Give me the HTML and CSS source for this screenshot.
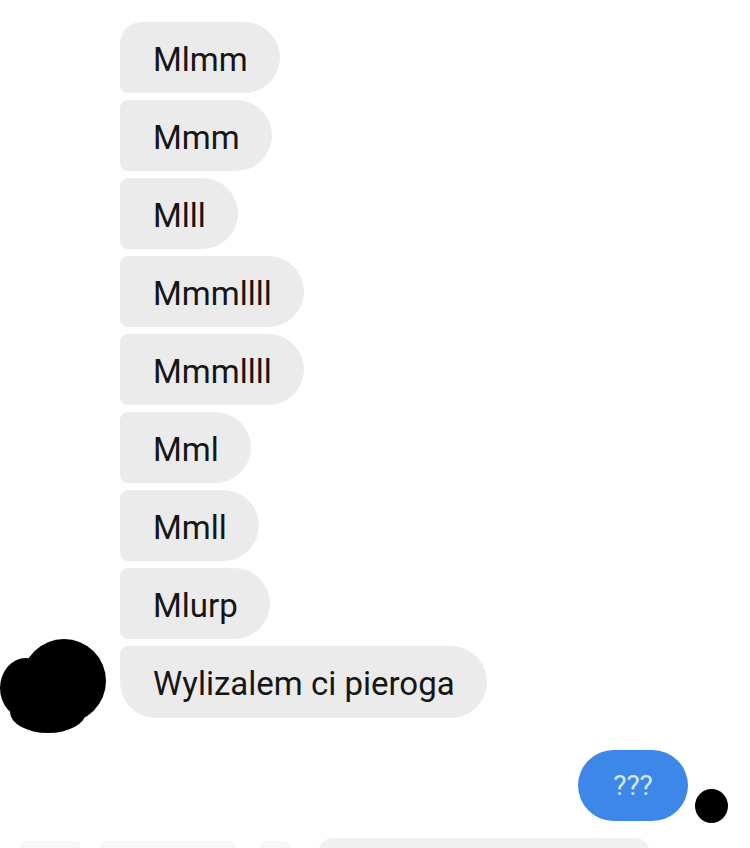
FILE: index.html
```html
<!DOCTYPE html>
<html>
<head>
<meta charset="utf-8">
<link rel="stylesheet" href="styles.css">
</head>
<body>
<div class="chat">
  <div class="group">
    <div class="slot"></div>
    <div class="bubbles">
      <div class="bubble first">Mlmm</div>
      <div class="bubble">Mmm</div>
      <div class="bubble">Mlll</div>
      <div class="bubble">Mmmllll</div>
      <div class="bubble">Mmmllll</div>
      <div class="bubble">Mml</div>
      <div class="bubble">Mmll</div>
      <div class="bubble">Mlurp</div>
      <div class="bubble last">Wylizalem ci pieroga</div>
    </div>
    <svg class="avatar" width="110" height="100" viewBox="0 0 110 100">
      <ellipse cx="64" cy="47" rx="42" ry="42" fill="#000"/>
      <ellipse cx="48" cy="78" rx="38" ry="21" fill="#000"/>
      <ellipse cx="26" cy="54" rx="26" ry="30" fill="#000"/>
    </svg>
  </div>
  <div class="mine">
    <div class="bubble blue">???</div>
    <div class="seen"></div>
  </div>
  <div class="composer">
    <div class="faint short"></div>
    <div class="faint mid"></div>
    <div class="faint tiny"></div>
    <div class="inputbox"></div>
  </div>
</div>
</body>
</html>
```
FILE: styles.css
```css
html, body {
  margin: 0;
  padding: 0;
  background: #ffffff;
}
body {
  width: 750px;
  height: 848px;
  overflow: hidden;
  font-family: Roboto, "Liberation Sans", sans-serif;
}
.chat {
  padding-top: 22px;
}
.group {
  position: relative;
  display: flex;
}
.slot {
  width: 120px;
  flex: none;
}
.bubbles {
  display: flex;
  flex-direction: column;
  align-items: flex-start;
  gap: 7px;
}
.bubble {
  height: 71px;
  box-sizing: border-box;
  padding: 3px 32px 0 33px;
  display: flex;
  align-items: center;
  background: #ebebeb;
  color: #161616;
  font-size: 33px;
  border-radius: 8px 36px 36px 8px;
  white-space: nowrap;
}
.bubble.first {
  border-top-left-radius: 22px;
}
.bubble.last {
  height: 72px;
  border-bottom-left-radius: 36px;
  border-top-left-radius: 8px;
}
.avatar {
  position: absolute;
  left: 0;
  bottom: -16px;
}
.mine {
  display: flex;
  justify-content: flex-end;
  align-items: flex-end;
  gap: 7px;
  margin-top: 32px;
  padding-right: 22px;
}
.bubble.blue {
  background: #3d87e8;
  color: #d9e7fa;
  font-size: 28px;
  padding: 0;
  width: 110px;
  justify-content: center;
  border-radius: 36px;
}
.seen {
  width: 33px;
  height: 34px;
  border-radius: 50%;
  background: #000;
  margin-bottom: -2px;
}
.composer {
  display: flex;
  align-items: flex-start;
  margin-top: 14px;
  padding-left: 20px;
  height: 20px;
}
.faint {
  height: 12px;
  margin-top: 6px;
  background: #f7f7f7;
  border-radius: 4px;
}
.short { width: 60px; }
.mid { width: 135px; margin-left: 20px; }
.tiny { width: 30px; margin-left: 25px; }
.inputbox {
  margin-left: 28px;
  width: 332px;
  height: 30px;
  margin-top: 3px;
  background: #f0f0f2;
  border-radius: 16px;
}
```
